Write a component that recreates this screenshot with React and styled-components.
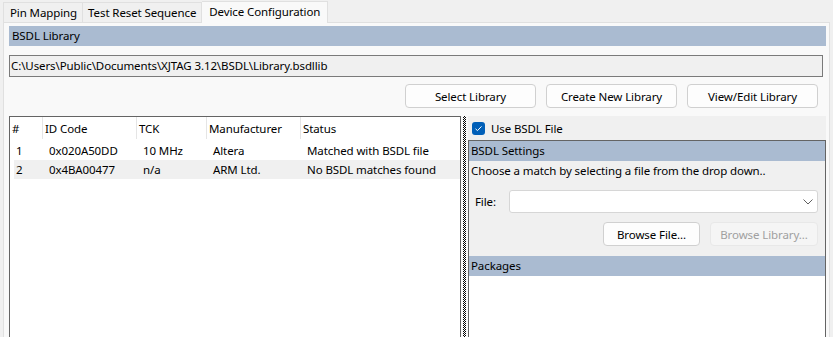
import React from 'react'
import styled, { createGlobalStyle } from 'styled-components'

const GlobalStyle = createGlobalStyle`
  html, body {
    margin: 0;
    padding: 0;
    background: #f0f0f0;
    font-family: 'Segoe UI', 'Noto Sans', sans-serif;
    font-size: 11.5px;
    letter-spacing: -0.1px;
    color: #000;
    overflow: hidden;
  }
`

const Window = styled.div`
  display: flex;
  flex-direction: column;
  height: 100vh;
  padding-left: 3px;
  padding-right: 3px;
`

const TabStrip = styled.div`
  display: flex;
  align-items: flex-end;
  height: 22px;
`

const Tab = styled.div`
  display: flex;
  align-items: center;
  height: ${(p) => (p.active ? '22px' : '20px')};
  padding: 0 ${(p) => (p.active ? '7px' : '5px')};
  padding-left: ${(p) => (p.first ? '6px' : undefined)};
  padding-bottom: ${(p) => (p.active ? '2px' : '0')};
  box-sizing: border-box;
  background: ${(p) => (p.active ? '#f9f9f9' : '#f0f0f0')};
  border: 1px solid #e0e0e0;
  border-bottom: none;
  border-left: ${(p) => (p.first ? '1px solid #e0e0e0' : 'none')};
  margin-bottom: ${(p) => (p.active ? '-1px' : '0')};
  position: relative;
  z-index: ${(p) => (p.active ? 1 : 0)};
  white-space: nowrap;
`

const Panel = styled.div`
  flex: 1;
  display: flex;
  flex-direction: column;
  background: #f9f9f9;
  border: 1px solid #e0e0e0;
  border-bottom: none;
  padding: 3px 3px 0 5px;
  min-height: 0;
`

const HeaderBar = styled.div`
  background: #aabbd1;
  height: 20px;
  line-height: 20px;
  padding-left: ${(p) => p.indent || 3}px;
  flex-shrink: 0;
`

const PathBox = styled.div`
  margin-top: 9px;
  margin-right: 3px;
  height: 22px;
  line-height: 20px;
  box-sizing: border-box;
  border: 1px solid #7a7a7a;
  background: #f0f0f0;
  padding-left: 1px;
`

const ButtonRow = styled.div`
  display: flex;
  justify-content: flex-end;
  gap: 10px;
  margin-top: 7px;
  padding-right: 8px;
`

const Button = styled.div`
  width: ${(p) => p.width || 131}px;
  height: 24px;
  box-sizing: border-box;
  display: flex;
  align-items: center;
  justify-content: center;
  border: 1px solid ${(p) => (p.disabled ? '#e8e8e8' : '#d0d0d0')};
  border-radius: 4px;
  background: ${(p) => (p.disabled ? '#f5f5f5' : '#fdfdfd')};
  color: ${(p) => (p.disabled ? '#a0a0a0' : '#000')};
`

const Split = styled.div`
  flex: 1;
  display: flex;
  margin-top: 6px;
  min-height: 0;
`

const TablePane = styled.div`
  width: 450px;
  margin-top: 2px;
  border: 1px solid #646464;
  border-bottom: none;
  background: #fff;
  display: flex;
  flex-direction: column;
`

const Grid = styled.div`
  display: grid;
  grid-template-columns: 33px 94px 70px 94px 1fr;
  height: ${(p) => p.height}px;
  margin-left: ${(p) => p.offset || 0}px;
  background: ${(p) => (p.shaded ? '#f0f0f0' : 'transparent')};
  align-items: center;
`

const HeadCell = styled.div`
  height: 100%;
  display: flex;
  align-items: center;
  padding-left: 2px;
  border-right: ${(p) => (p.last ? 'none' : '1px solid #e5e5e5')};
`

const Cell = styled.div`
  padding-left: 2px;
  white-space: nowrap;
`

const Splitter = styled.div`
  width: 3px;
  margin: 2px 2px 0 2px;
  background: repeating-conic-gradient(#000 0 25%, #fff 0 50%) 0 0 / 2px 2px;
`

const SidePane = styled.div`
  flex: 1;
  display: flex;
  flex-direction: column;
  background: #f0f0f0;
  border-top: 1px solid #f9f9f9;
  margin-top: 1px;
  min-width: 0;
`

const CheckRow = styled.label`
  display: flex;
  align-items: center;
  gap: 6px;
  height: 24px;
  padding-left: 4px;
`

const CheckBox = styled.span`
  width: 13px;
  height: 13px;
  border-radius: 3px;
  background: #005fb8;
  display: flex;
  align-items: center;
  justify-content: center;
`

const Group = styled.div`
  flex: 1;
  border: 1px solid #646464;
  border-bottom: none;
  display: flex;
  flex-direction: column;
`

const Hint = styled.div`
  height: 20px;
  line-height: 20px;
  padding-left: 2px;
`

const FileRow = styled.div`
  display: flex;
  align-items: center;
  margin-top: 9px;
  padding: 0 7px 0 6px;
`

const FileLabel = styled.span`
  width: 34px;
`

const Combo = styled.div`
  flex: 1;
  height: 23px;
  box-sizing: border-box;
  background: #fff;
  border: 1px solid #d6d6d6;
  border-radius: 3px;
  display: flex;
  align-items: center;
  justify-content: flex-end;
  padding-right: 4px;
`

const BrowseRow = styled.div`
  display: flex;
  justify-content: flex-end;
  gap: 10px;
  margin-top: 9px;
  margin-bottom: 10px;
  padding-right: 7px;
`

const PackageList = styled.div`
  flex: 1;
  background: #fff;
`

const columns = ['#', 'ID Code', 'TCK', 'Manufacturer', 'Status']

const devices = [
  { id: '1', code: '0x020A50DD', tck: '10 MHz', maker: 'Altera', status: 'Matched with BSDL file' },
  { id: '2', code: '0x4BA00477', tck: 'n/a', maker: 'ARM Ltd.', status: 'No BSDL matches found' }
]

const App = () => (
  <>
    <GlobalStyle />
    <Window>
      <TabStrip>
        <Tab first>Pin Mapping</Tab>
        <Tab>Test Reset Sequence</Tab>
        <Tab active>Device Configuration</Tab>
      </TabStrip>
      <Panel>
        <HeaderBar>BSDL Library</HeaderBar>
        <PathBox>C:\Users\Public\Documents\XJTAG 3.12\BSDL\Library.bsdllib</PathBox>
        <ButtonRow>
          <Button>Select Library</Button>
          <Button>Create New Library</Button>
          <Button>View/Edit Library</Button>
        </ButtonRow>
        <Split>
          <TablePane>
            <Grid height={22}>
              {columns.map((c, i) => (
                <HeadCell key={c} last={i === columns.length - 1}>{c}</HeadCell>
              ))}
            </Grid>
            <div style={{ height: 2 }} />
            {devices.map((d, i) => (
              <Grid key={d.id} height={19} offset={4} shaded={i % 2 === 1}>
                <Cell>{d.id}</Cell>
                <Cell>{d.code}</Cell>
                <Cell>{d.tck}</Cell>
                <Cell>{d.maker}</Cell>
                <Cell>{d.status}</Cell>
              </Grid>
            ))}
          </TablePane>
          <Splitter />
          <SidePane>
            <CheckRow>
              <CheckBox>
                <svg width="9" height="9" viewBox="0 0 9 9">
                  <polyline points="1.5,4.8 3.5,6.6 7.5,2.4" fill="none" stroke="#fff" strokeWidth="1" />
                </svg>
              </CheckBox>
              Use BSDL File
            </CheckRow>
            <Group>
              <HeaderBar indent={2}>BSDL Settings</HeaderBar>
              <Hint>Choose a match by selecting a file from the drop down..</Hint>
              <FileRow>
                <FileLabel>File:</FileLabel>
                <Combo>
                  <svg width="10" height="6" viewBox="0 0 10 6">
                    <polyline points="0.5,0.5 5,5 9.5,0.5" fill="none" stroke="#606060" strokeWidth="1" />
                  </svg>
                </Combo>
              </FileRow>
              <BrowseRow>
                <Button width={97}>Browse File...</Button>
                <Button width={108} disabled>Browse Library...</Button>
              </BrowseRow>
              <HeaderBar indent={2}>Packages</HeaderBar>
              <PackageList />
            </Group>
          </SidePane>
        </Split>
      </Panel>
    </Window>
  </>
)

export default App
